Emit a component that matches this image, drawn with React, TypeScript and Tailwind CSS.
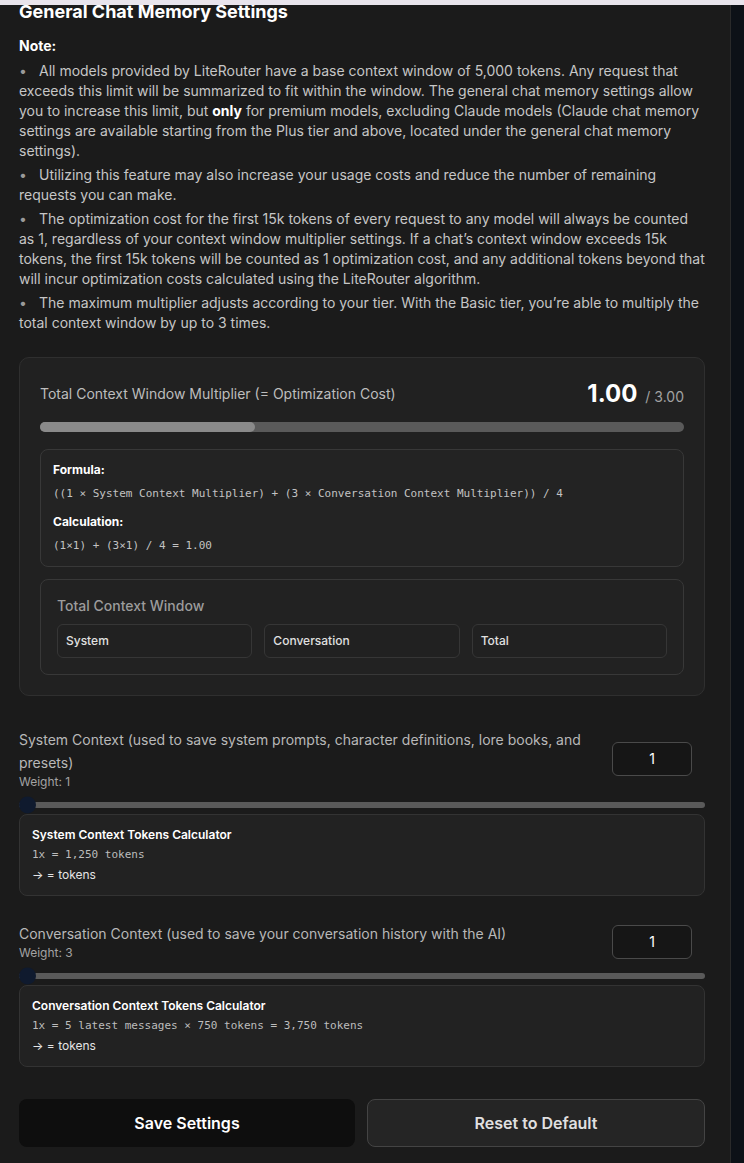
import React from 'react'

const notes: React.ReactNode[] = [
  <>
    All models provided by LiteRouter have a base context window of 5,000 tokens. Any request that exceeds this
    limit will be summarized to fit within the window. The general chat memory settings allow you to increase this
    limit, but <span className="font-bold text-white">only</span> for premium models, excluding Claude models (Claude
    chat memory settings are available starting from the Plus tier and above, located under the general chat memory
    settings).
  </>,
  <>Utilizing this feature may also increase your usage costs and reduce the number of remaining requests you can make.</>,
  <>
    The optimization cost for the first 15k tokens of every request to any model will always be counted as 1,
    regardless of your context window multiplier settings. If a chat’s context window exceeds 15k tokens, the first
    15k tokens will be counted as 1 optimization cost, and any additional tokens beyond that will incur optimization
    costs calculated using the LiteRouter algorithm.
  </>,
  <>
    The maximum multiplier adjusts according to your tier. With the Basic tier, you’re able to multiply the total
    context window by up to 3 times.
  </>,
]

const mono = "font-['DejaVu_Sans_Mono',monospace] text-[11px]"

function ContextSection({
  label,
  weight,
  title,
  calc,
}: {
  label: string
  weight: number
  title: string
  calc: string
}) {
  return (
    <div>
      <div className="flex items-center gap-4">
        <div className="flex-1">
          <div className="text-[14px] leading-[23px] text-[#b8b8b8]">{label}</div>
          <div className="text-xs leading-4 text-[#a3a3a3]">Weight: {weight}</div>
        </div>
        <div className="mr-[13px] flex h-[34px] w-20 items-center justify-center rounded-md border border-[#4a4a4a] bg-[#161616] text-sm text-white">
          1
        </div>
      </div>

      {/* slider */}
      <div className="relative mt-3 h-1.5 rounded-full bg-[#5a5a5a]">
        <div className="absolute left-0 top-1/2 h-[17px] w-[17px] -translate-y-1/2 rounded-full bg-[#0f1a2e]" />
      </div>

      <div className="mt-[6px] rounded-lg border border-[#333] bg-[#222] p-3">
        <div className="text-xs font-semibold leading-4 text-white">{title}</div>
        <div className={`mt-1 leading-4 text-[#bdbdbd] ${mono}`}>{calc}</div>
        <div className="mt-1 text-xs leading-4 text-[#e5e5e5]">→ = tokens</div>
      </div>
    </div>
  )
}

export default function App() {
  return (
    <div className="flex h-[1163px] flex-col overflow-hidden bg-[#1b1b1b] font-['Inter',sans-serif]">
      <div className="h-[5px] shrink-0 bg-[#e8e4ec]" />
      <div className="flex flex-1 overflow-hidden">
        <div className="w-[730px] shrink-0 overflow-hidden pb-4 pl-[19px] pr-[25px]">
          <h2 className="-mt-[7px] text-lg font-bold leading-7 text-white">General Chat Memory Settings</h2>

          <div className="mt-[10px] text-sm font-bold leading-5 text-white">Note:</div>
          <ul className="mt-[5px] text-sm leading-5 text-[#c6c6c6]">
            {notes.map((n, i) => (
              <li key={i} className={i > 0 ? 'mt-1' : ''}>
                <span className="inline-block w-5 text-[#9a9a9a]">•</span>
                {n}
              </li>
            ))}
          </ul>

          {/* multiplier card */}
          <div className="mt-6 rounded-[10px] border border-[#2f2f2f] bg-[#212121] p-5">
            <div className="flex h-8 items-center justify-between">
              <span className="text-sm text-[#bdbdbd]">Total Context Window Multiplier (= Optimization Cost)</span>
              <span className="flex items-baseline gap-2">
                <span className="text-2xl font-bold text-white">1.00</span>
                <span className="text-sm text-[#a3a3a3]">/ 3.00</span>
              </span>
            </div>
            <div className="mt-3 h-2.5 rounded-full bg-[#5a5a5a]">
              <div className="h-full rounded-full bg-[#8a8a8a]" style={{ width: `${(1 / 3) * 100}%` }} />
            </div>

            <div className="mt-[17px] rounded-lg border border-[#383838] bg-[#232323] p-3">
              <div className="text-xs font-bold leading-4 text-white">Formula:</div>
              <div className={`mt-2 leading-4 text-[#c2c2c2] ${mono}`}>
                ((1 × System Context Multiplier) + (3 × Conversation Context Multiplier)) / 4
              </div>
              <div className="mt-3 text-xs font-bold leading-4 text-white">Calculation:</div>
              <div className={`mt-2 leading-4 text-[#c2c2c2] ${mono}`}>(1×1) + (3×1) / 4 = 1.00</div>
            </div>

            <div className="mt-3 rounded-lg border border-[#383838] bg-[#222] p-4">
              <div className="text-sm font-medium leading-5 text-[#9c9c9c]">Total Context Window</div>
              <div className="mt-2 grid grid-cols-3 gap-3">
                {['System', 'Conversation', 'Total'].map(t => (
                  <div key={t} className="rounded-md border border-[#363636] bg-[#212121] px-2 py-2 text-xs font-medium leading-4 text-[#e0e0e0]">
                    {t}
                  </div>
                ))}
              </div>
            </div>
          </div>

          <div className="mt-8">
            <ContextSection
              label="System Context (used to save system prompts, character definitions, lore books, and presets)"
              weight={1}
              title="System Context Tokens Calculator"
              calc="1x = 1,250 tokens"
            />
          </div>

          <div className="mt-[26px]">
            <ContextSection
              label="Conversation Context (used to save your conversation history with the AI)"
              weight={3}
              title="Conversation Context Tokens Calculator"
              calc="1x = 5 latest messages × 750 tokens = 3,750 tokens"
            />
          </div>

          <div className="mt-8 flex gap-3">
            <button className="h-12 flex-1 rounded-lg bg-[#0e0e0e] text-base font-semibold text-white">Save Settings</button>
            <button className="h-12 flex-1 rounded-lg border border-[#444] bg-[#252525] text-base font-semibold text-[#e0e0e0]">
              Reset to Default
            </button>
          </div>
        </div>
        <div className="flex-1 border-l border-[#2a2a2a] bg-[#0d1117]" />
      </div>
    </div>
  )
}
